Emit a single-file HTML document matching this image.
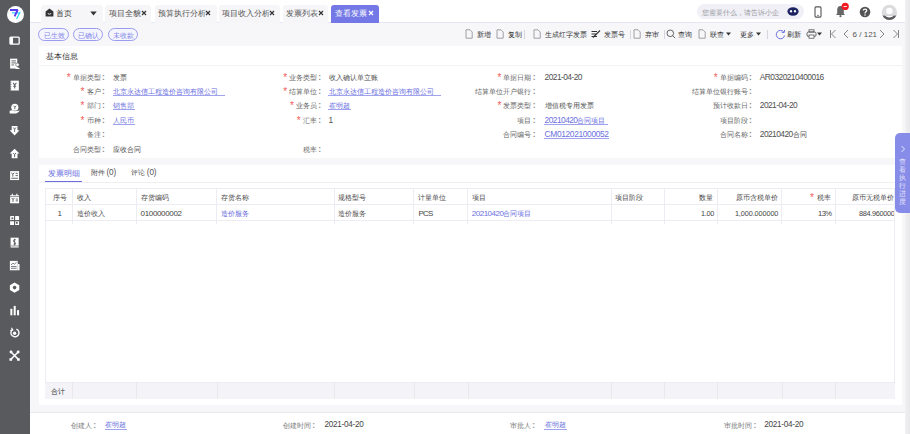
<!DOCTYPE html>
<html><head><meta charset="utf-8">
<style>
*{box-sizing:border-box}
html,body{margin:0;padding:0}
body{width:910px;height:434px;overflow:hidden;position:relative;background:#f7f7fa;font-family:"Liberation Sans",sans-serif;color:#333;font-size:7.2px}
.a{position:absolute}
.t{position:absolute;white-space:nowrap;line-height:10px;height:10px}
.t b{font-weight:normal;font-size:5.6px;-webkit-text-stroke:2.4px currentColor;text-shadow:1.2px 0 currentColor;opacity:0.5;position:relative;left:0.74px;top:-0.78px}
.t em{font-style:normal}
.cjk .t b{font-size:var(--p);letter-spacing:0!important;-webkit-text-stroke:0;text-shadow:none;opacity:1;top:0.3px;left:0}
.bd b{opacity:.6}
.bd em{font-weight:bold}
.ul{position:absolute;height:0.9px;background:#9fa3ee}
.tab{position:absolute;top:5px;height:17.5px;background:#f6f6f8;border-radius:3px 3px 0 0}
.pill{position:absolute;top:28.4px;height:13px;border:0.8px solid #9a9cf0;border-radius:7px;background:#f5f5fe}
.sep{position:absolute;top:30px;width:1px;height:9px;background:#d6d6de}
.vl{position:absolute;width:1px;background:#ececf2}
.hl{position:absolute;height:1px;background:#ececf2}
</style></head><body>

<div class="a" style="left:0;top:0;width:30px;height:434px;background:#595a5e"></div>
<div class="a" style="left:6.9px;top:5.6px;width:17.2px;height:17.2px;border-radius:50%;background:#fff"></div>
<svg class="a" style="left:0;top:0" width="30" height="30" viewBox="0 0 30 30"><path d="M12 12.8 L19.8 12.8 L16.6 19" stroke="#30d2f2" stroke-width="1.2" fill="none"/><path d="M10 10 L17.6 10 L14.6 16.4" stroke="#5a3cf2" stroke-width="1.9" fill="none" stroke-linejoin="bevel"/></svg>
<svg class="a" style="left:9.3px;top:35.40px" width="11.2" height="11.2" viewBox="0 0 10 10"><rect x="0.9" y="1.9" width="8.2" height="6.2" rx="0.8" stroke="#fff" stroke-width="1.2" fill="none"/><rect x="1" y="2" width="2.6" height="6" fill="#fff"/></svg>
<svg class="a" style="left:9.3px;top:57.85px" width="11.2" height="11.2" viewBox="0 0 10 10"><rect x="1" y="0.6" width="6.4" height="8.8" fill="#fff"/><path d="M2.2 2.6 H6.2 M2.2 4.4 H6.2 M2.2 6.2 H4.5" stroke="#595a5e" stroke-width="0.8"/><circle cx="7.6" cy="6" r="1.6" fill="#fff" stroke="#595a5e" stroke-width="0.6"/><path d="M5.4 9.8 Q7.6 6.8 9.8 9.8 Z" fill="#fff"/></svg>
<svg class="a" style="left:9.3px;top:80.30px" width="11.2" height="11.2" viewBox="0 0 10 10"><rect x="1.4" y="0.6" width="7.4" height="8.8" fill="#fff"/><path d="M1 2 H2.2 M1 4 H2.2 M1 6 H2.2 M1 8 H2.2" stroke="#595a5e" stroke-width="0.6"/><path d="M3.6 2.4 L5.1 4.6 L6.6 2.4 M5.1 4.6 V7.6 M3.8 5.6 H6.4" stroke="#595a5e" stroke-width="0.9" fill="none"/></svg>
<svg class="a" style="left:9.3px;top:102.75px" width="11.2" height="11.2" viewBox="0 0 10 10"><circle cx="5.2" cy="3.8" r="3.2" fill="#fff"/><path d="M4 2.4 L5.2 3.8 L6.4 2.4 M5.2 3.8 V5.6" stroke="#595a5e" stroke-width="0.8" fill="none"/><path d="M0.6 7 Q3 5.6 5 7.4 L9.6 6.6 Q8 9.4 5 9.4 L0.6 9.4 Z" fill="#fff"/></svg>
<svg class="a" style="left:9.3px;top:125.20px" width="11.2" height="11.2" viewBox="0 0 10 10"><path d="M2.4 0.8 H7.6 V4.6 H9.4 L5 9.4 L0.6 4.6 H2.4 Z" fill="#fff"/><path d="M3.8 2.2 L5 3.8 L6.2 2.2 M5 3.8 V6.2" stroke="#595a5e" stroke-width="0.8" fill="none"/></svg>
<svg class="a" style="left:9.3px;top:147.65px" width="11.2" height="11.2" viewBox="0 0 10 10"><path d="M5 0.6 L9.4 5 H7.6 V9.2 H2.4 V5 H0.6 Z" fill="#fff"/><path d="M3.8 4.4 L5 6 L6.2 4.4 M5 6 V8.2" stroke="#595a5e" stroke-width="0.8" fill="none"/></svg>
<svg class="a" style="left:9.3px;top:170.10px" width="11.2" height="11.2" viewBox="0 0 10 10"><rect x="1" y="1" width="8" height="8" fill="#fff"/><path d="M2.2 2.4 L3.4 4 L4.6 2.4 M3.4 4 V6 M5.8 3 H8 M5.8 5 H8 M2 7.4 H8" stroke="#595a5e" stroke-width="0.8" fill="none"/></svg>
<svg class="a" style="left:9.3px;top:192.55px" width="11.2" height="11.2" viewBox="0 0 10 10"><rect x="1" y="2" width="8" height="7.2" fill="#fff"/><path d="M3 0.6 V2.6 M7 0.6 V2.6" stroke="#fff" stroke-width="1"/><path d="M1 3.2 H9" stroke="#595a5e" stroke-width="0.6"/><path d="M2.4 4.4 L3.6 6 L4.8 4.4 M3.6 6 V8 M6 5.4 H8 M6 7 H8" stroke="#595a5e" stroke-width="0.8" fill="none"/></svg>
<svg class="a" style="left:9.3px;top:215.00px" width="11.2" height="11.2" viewBox="0 0 10 10"><rect x="1" y="1" width="8" height="8" rx="0.6" fill="#fff"/><path d="M5 1 V9 M1 5 H9" stroke="#595a5e" stroke-width="1"/><rect x="2.2" y="2.2" width="1.6" height="1.6" fill="#595a5e"/><rect x="6.2" y="6.2" width="1.6" height="1.6" fill="#595a5e"/></svg>
<svg class="a" style="left:9.3px;top:237.45px" width="11.2" height="11.2" viewBox="0 0 10 10"><rect x="1.4" y="0.6" width="7.2" height="8.8" fill="#fff"/><path d="M6 2.4 Q4 1.8 4 3.4 Q4 4.6 5.2 4.8 Q6.4 5.2 5.8 6.4 Q5 7 4 6.4 M5 1.6 V7.6" stroke="#595a5e" stroke-width="0.8" fill="none"/><path d="M1.4 8 H8.6" stroke="#595a5e" stroke-width="0.6"/></svg>
<svg class="a" style="left:9.3px;top:259.90px" width="11.2" height="11.2" viewBox="0 0 10 10"><rect x="0.8" y="0.8" width="7" height="8.4" fill="#fff"/><rect x="7.8" y="3.6" width="1.6" height="5.6" fill="#fff"/><path d="M1.8 4.4 L3.6 2.8 L4.8 3.8 L6.8 2" stroke="#595a5e" stroke-width="0.7" fill="none"/><path d="M1.8 5.8 H6.8 M1.8 7.4 H6.8" stroke="#595a5e" stroke-width="0.7"/></svg>
<svg class="a" style="left:9.3px;top:282.35px" width="11.2" height="11.2" viewBox="0 0 10 10"><path d="M5 0.4 L9.2 2.8 V7.2 L5 9.6 L0.8 7.2 V2.8 Z" fill="#fff"/><circle cx="5" cy="5" r="1.6" fill="#595a5e"/></svg>
<svg class="a" style="left:9.3px;top:304.80px" width="11.2" height="11.2" viewBox="0 0 10 10"><rect x="1.2" y="3.4" width="1.8" height="5.8" fill="#fff"/><rect x="4.2" y="0.8" width="1.8" height="8.4" fill="#fff"/><rect x="7.2" y="4.6" width="1.8" height="4.6" fill="#fff"/></svg>
<svg class="a" style="left:9.3px;top:327.25px" width="11.2" height="11.2" viewBox="0 0 10 10"><path d="M3 2.4 A3.6 3.6 0 1 0 6.6 1.8" stroke="#fff" stroke-width="1.2" fill="none"/><path d="M2.2 0.6 L3.4 2.6 L1.2 3.2" stroke="#fff" stroke-width="1" fill="none"/><circle cx="5" cy="5.6" r="1.5" fill="#fff"/></svg>
<svg class="a" style="left:9.3px;top:349.70px" width="11.2" height="11.2" viewBox="0 0 10 10"><path d="M1.4 1.4 L8.6 8.6 M8.6 1.4 L1.4 8.6" stroke="#fff" stroke-width="1.3"/><circle cx="1.8" cy="1.8" r="1.3" fill="#fff"/><circle cx="8.2" cy="1.8" r="1.3" fill="#fff"/><rect x="0.4" y="7.4" width="2.4" height="2.2" fill="#fff"/><rect x="7.2" y="7.4" width="2.4" height="2.2" fill="#fff"/></svg>
<div class="a" style="left:30px;top:0;width:880px;height:23px;background:#fff;border-bottom:1px solid #e6e7f4"></div>
<div class="tab" style="left:41px;width:61.5px;"></div>
<div class="tab" style="left:105.4px;width:46.1px;"></div>
<div class="tab" style="left:154.6px;width:62.2px;"></div>
<div class="tab" style="left:218.8px;width:61.2px;"></div>
<div class="tab" style="left:282.5px;width:45.5px;"></div>
<div class="tab" style="left:331px;width:47.8px;background:#7378e6"></div>
<div class="t " style="top:8.00px;color:#444;font-size:8.4px;left:56.00px;"><b style="--p:7.90px;letter-spacing:3.70px">首页</b></div>
<div class="t " style="top:8.00px;color:#555;font-size:8.4px;left:109.00px;"><b style="--p:7.85px;letter-spacing:3.65px">项目全貌</b></div>
<div class="t " style="top:8.00px;color:#555;font-size:8.4px;left:158.00px;"><b style="--p:7.85px;letter-spacing:3.65px">预算执行分析</b></div>
<div class="t " style="top:8.00px;color:#555;font-size:8.4px;left:222.00px;"><b style="--p:7.85px;letter-spacing:3.65px">项目收入分析</b></div>
<div class="t " style="top:8.00px;color:#555;font-size:8.4px;left:285.80px;"><b style="--p:7.85px;letter-spacing:3.65px">发票列表</b></div>
<div class="t " style="top:8.00px;color:#fff;font-size:8.4px;left:335.00px;"><b style="--p:7.85px;letter-spacing:3.65px">查看发票</b></div>
<svg class="a" style="left:45px;top:8.3px" width="9" height="9" viewBox="0 0 9 9"><path d="M4.5 0.6 L8.4 3.6 L8.4 8.4 L0.6 8.4 L0.6 3.6 Z" fill="#333"/><path d="M2.8 5.6 Q4.5 6.8 6.2 5.6" stroke="#fff" stroke-width="0.9" fill="none"/></svg>
<svg class="a" style="left:90px;top:11.3px" width="7" height="5" viewBox="0 0 7 5"><path d="M0.3 0.5 L6.7 0.5 L3.5 4.5 Z" fill="#333"/></svg>
<svg class="a" style="left:141px;top:10.0px" width="6" height="6" viewBox="0 0 6 6"><path d="M1 1 L5 5 M5 1 L1 5" stroke="#333" stroke-width="1.2"/></svg>
<svg class="a" style="left:204.5px;top:10.0px" width="6" height="6" viewBox="0 0 6 6"><path d="M1 1 L5 5 M5 1 L1 5" stroke="#333" stroke-width="1.2"/></svg>
<svg class="a" style="left:269px;top:10.0px" width="6" height="6" viewBox="0 0 6 6"><path d="M1 1 L5 5 M5 1 L1 5" stroke="#333" stroke-width="1.2"/></svg>
<svg class="a" style="left:318px;top:10.0px" width="6" height="6" viewBox="0 0 6 6"><path d="M1 1 L5 5 M5 1 L1 5" stroke="#333" stroke-width="1.2"/></svg>
<svg class="a" style="left:367.5px;top:10.0px" width="6" height="6" viewBox="0 0 6 6"><path d="M1 1 L5 5 M5 1 L1 5" stroke="#fff" stroke-width="1.2"/></svg>
<div class="a" style="left:697px;top:3.6px;width:106.6px;height:15.8px;border-radius:8px;background:#f0f0f6"></div>
<div class="t " style="top:6.60px;color:#9a9a9e;font-size:8.4px;left:702.00px;"><b style="--p:7.05px;letter-spacing:2.85px">您需要什么，请告诉小企</b></div>
<svg class="a" style="left:787px;top:7px" width="12" height="9" viewBox="0 0 12 9"><ellipse cx="6" cy="4.5" rx="5.6" ry="4.2" fill="#1d2360"/><ellipse cx="4" cy="4.3" rx="1.1" ry="1.3" fill="#fff"/><ellipse cx="8" cy="4.3" rx="1.1" ry="1.3" fill="#fff"/></svg>
<svg class="a" style="left:814px;top:5.5px" width="8" height="12" viewBox="0 0 8 12"><rect x="1" y="0.9" width="6" height="10.2" rx="1" stroke="#555" stroke-width="1.1" fill="none"/><line x1="3" y1="9.4" x2="5" y2="9.4" stroke="#555" stroke-width="0.7"/></svg>
<svg class="a" style="left:834px;top:2px" width="15" height="16" viewBox="0 0 15 16"><path d="M6.5 4 C4 4 3.2 6 3.2 8.2 L3.2 11.6 L2 13 L11 13 L9.8 11.6 L9.8 8.2 C9.8 6 9 4 6.5 4 Z" fill="#666"/><circle cx="6.5" cy="14.2" r="1.1" fill="#666"/><circle cx="11.2" cy="4.4" r="3.6" fill="#f01b24"/><rect x="9.6" y="4" width="3.2" height="0.9" fill="#fff"/></svg>
<svg class="a" style="left:858px;top:4.5px" width="14" height="14" viewBox="0 0 14 14"><circle cx="7" cy="7" r="5.3" fill="#555"/><path d="M5.3 5.6 C5.3 3.6 8.7 3.6 8.7 5.6 C8.7 6.9 7 6.8 7 8.4" stroke="#fff" stroke-width="1.2" fill="none"/><circle cx="7" cy="10" r="0.75" fill="#fff"/></svg>
<svg class="a" style="left:880px;top:2.5px" width="19" height="19" viewBox="0 0 19 19"><defs><clipPath id="av"><circle cx="9.4" cy="9.4" r="7.7"/></clipPath></defs><circle cx="9.4" cy="9.4" r="7.7" fill="#dcdcdf"/><g clip-path="url(#av)"><rect x="0" y="12.6" width="19" height="6" fill="#5a5a5e"/><path d="M4.6 12.6 Q9.4 16.6 14.2 12.6 Z" fill="#fff"/></g><circle cx="9.4" cy="8" r="3.2" fill="#fff"/></svg>
<div class="pill" style="left:38.4px;width:30.5px"></div>
<div class="t " style="top:29.90px;color:#8387e8;font-size:8.4px;left:39.10px;width:30.500000000000007px;text-align:center;"><b style="--p:7.00px;letter-spacing:2.80px">已生效</b></div>
<div class="pill" style="left:72.9px;width:30.3px"></div>
<div class="t " style="top:29.90px;color:#8387e8;font-size:8.4px;left:73.60px;width:30.299999999999997px;text-align:center;"><b style="--p:7.00px;letter-spacing:2.80px">已确认</b></div>
<div class="pill" style="left:108px;width:30.0px"></div>
<div class="t " style="top:29.90px;color:#8387e8;font-size:8.4px;left:108.70px;width:30px;text-align:center;"><b style="--p:7.00px;letter-spacing:2.80px">未收款</b></div>
<div class="t " style="top:29.10px;color:#333;font-size:8.4px;left:476.50px;"><b style="--p:7.00px;letter-spacing:2.80px">新增</b></div>
<div class="t " style="top:29.10px;color:#333;font-size:8.4px;left:507.60px;"><b style="--p:7.00px;letter-spacing:2.80px">复制</b></div>
<div class="t " style="top:29.10px;color:#333;font-size:8.4px;left:544.80px;"><b style="--p:7.00px;letter-spacing:2.80px">生成红字发票</b></div>
<div class="t " style="top:29.10px;color:#333;font-size:8.4px;left:603.60px;"><b style="--p:7.00px;letter-spacing:2.80px">发票号</b></div>
<div class="t " style="top:29.10px;color:#333;font-size:8.4px;left:644.80px;"><b style="--p:7.00px;letter-spacing:2.80px">弃审</b></div>
<div class="t " style="top:29.10px;color:#333;font-size:8.4px;left:677.60px;"><b style="--p:7.00px;letter-spacing:2.80px">查询</b></div>
<div class="t " style="top:29.10px;color:#333;font-size:8.4px;left:709.80px;"><b style="--p:7.00px;letter-spacing:2.80px">联查</b></div>
<div class="t " style="top:29.10px;color:#333;font-size:8.4px;left:740.20px;"><b style="--p:7.00px;letter-spacing:2.80px">更多</b></div>
<div class="t " style="top:29.10px;color:#333;font-size:8.4px;left:786.80px;"><b style="--p:7.00px;letter-spacing:2.80px">刷新</b></div>
<div class="sep" style="left:524.3px"></div>
<div class="sep" style="left:630.3px"></div>
<div class="sep" style="left:664.4px"></div>
<div class="sep" style="left:767.2px"></div>
<svg class="a" style="left:464.8px;top:29.1px" width="8" height="10" viewBox="0 0 8 10"><path d="M1 0.8 L5 0.8 L7.2 3 L7.2 9.2 L1 9.2 Z" stroke="#8a8a8e" stroke-width="0.8" fill="none"/></svg>
<svg class="a" style="left:495.7px;top:29.1px" width="8" height="10" viewBox="0 0 8 10"><path d="M1 0.8 L5 0.8 L7.2 3 L7.2 9.2 L1 9.2 Z" stroke="#8a8a8e" stroke-width="0.8" fill="none"/></svg>
<svg class="a" style="left:533px;top:29.1px" width="8" height="10" viewBox="0 0 8 10"><path d="M1 0.8 L5 0.8 L7.2 3 L7.2 9.2 L1 9.2 Z" stroke="#8a8a8e" stroke-width="0.8" fill="none"/></svg>
<svg class="a" style="left:633px;top:29.1px" width="8" height="10" viewBox="0 0 8 10"><path d="M1 0.8 L5 0.8 L7.2 3 L7.2 9.2 L1 9.2 Z" stroke="#8a8a8e" stroke-width="0.8" fill="none"/></svg>
<svg class="a" style="left:698px;top:29.1px" width="8" height="10" viewBox="0 0 8 10"><path d="M1 0.8 L5 0.8 L7.2 3 L7.2 9.2 L1 9.2 Z" stroke="#8a8a8e" stroke-width="0.8" fill="none"/></svg>
<svg class="a" style="left:591px;top:30.1px" width="10" height="8" viewBox="0 0 10 8"><path d="M0.5 1.5 L6 1.5 M0.5 4 L5 4 M0.5 6.5 L6 6.5 M2 7.5 L9 0.5" stroke="#333" stroke-width="1.1"/></svg>
<svg class="a" style="left:665.5px;top:29.1px" width="10" height="10" viewBox="0 0 10 10"><circle cx="4.3" cy="4.3" r="3.3" stroke="#555" stroke-width="0.9" fill="none"/><path d="M6.7 6.7 L9.2 9.2" stroke="#555" stroke-width="0.9"/></svg>
<svg class="a" style="left:726.0px;top:32.1px" width="5" height="4" viewBox="0 0 5 4"><path d="M0 0.5 L5 0.5 L2.5 3.5 Z" fill="#333"/></svg>
<svg class="a" style="left:756.3px;top:32.1px" width="5" height="4" viewBox="0 0 5 4"><path d="M0 0.5 L5 0.5 L2.5 3.5 Z" fill="#333"/></svg>
<svg class="a" style="left:817.2px;top:32.1px" width="5" height="4" viewBox="0 0 5 4"><path d="M0 0.5 L5 0.5 L2.5 3.5 Z" fill="#333"/></svg>
<svg class="a" style="left:775px;top:28.6px" width="11" height="11" viewBox="0 0 11 11"><path d="M8.8 3 A4.2 4.2 0 1 0 9.6 6.5" stroke="#6b6fe0" stroke-width="1" fill="none"/><path d="M9.6 1 L9.2 3.6 L6.6 3.2" stroke="#6b6fe0" stroke-width="1" fill="none"/></svg>
<svg class="a" style="left:806px;top:29.1px" width="11" height="10" viewBox="0 0 11 10"><rect x="1" y="3" width="9" height="4.5" rx="1.5" stroke="#555" stroke-width="0.9" fill="none"/><rect x="3" y="0.8" width="5" height="2.2" stroke="#555" stroke-width="0.8" fill="none"/><rect x="3" y="6" width="5" height="3.2" stroke="#555" stroke-width="0.8" fill="#fff"/></svg>
<svg class="a" style="left:829px;top:29.1px" width="8" height="10" viewBox="0 0 8 10"><path d="M1.5 1 L1.5 9 M6.5 1 L2.5 5 L6.5 9" stroke="#666" stroke-width="0.8" fill="none"/></svg>
<svg class="a" style="left:843px;top:29.1px" width="6" height="10" viewBox="0 0 6 10"><path d="M5 1 L1 5 L5 9" stroke="#666" stroke-width="0.8" fill="none"/></svg>
<div class="t " style="top:29.60px;color:#555;font-size:8px;left:852.60px;"><em style="letter-spacing:0px">6 / 121</em></div>
<svg class="a" style="left:879px;top:29.1px" width="6" height="10" viewBox="0 0 6 10"><path d="M1 1 L5 5 L1 9" stroke="#666" stroke-width="0.8" fill="none"/></svg>
<svg class="a" style="left:891.5px;top:29.1px" width="8" height="10" viewBox="0 0 8 10"><path d="M1.5 1 L5.5 5 L1.5 9 M6.5 1 L6.5 9" stroke="#666" stroke-width="0.8" fill="none"/></svg>
<div class="a" style="left:39px;top:46px;width:862.5px;height:111.6px;background:#fff"></div>
<div class="hl" style="left:39px;top:64.5px;width:862.5px;background:#f3f3f6"></div>
<div class="t bd" style="top:50.40px;color:#333;font-size:8.4px;left:45.70px;"><b style="--p:8.30px;letter-spacing:4.10px">基本信息</b></div>
<div class="t " style="top:72.00px;color:#666;font-size:8.4px;right:805.90px;text-align:right;"><b style="--p:6.85px;letter-spacing:2.65px">单据类型</b><em style="letter-spacing:-0.55px"><i style="font-style:normal;font-weight:bold;font-size:8.5px;opacity:.75;margin-left:1.45px;margin-right:-0.2px">:</i></em></div>
<div class="t" style="left:66.85px;top:73.10px;color:#f25a5a;font-size:10px">*</div>
<div class="t " style="top:72.00px;color:#505050;font-size:8.4px;left:113.00px;"><b style="--p:7.15px;letter-spacing:2.95px">发票</b></div>
<div class="t " style="top:86.10px;color:#666;font-size:8.4px;right:805.90px;text-align:right;"><b style="--p:6.85px;letter-spacing:2.65px">客户</b><em style="letter-spacing:-0.55px"><i style="font-style:normal;font-weight:bold;font-size:8.5px;opacity:.75;margin-left:1.45px;margin-right:-0.2px">:</i></em></div>
<div class="t" style="left:80.55px;top:87.20px;color:#f25a5a;font-size:10px">*</div>
<div class="t " style="top:86.10px;color:#6b6fe0;font-size:8.4px;left:113.00px;"><b style="--p:7.47px;letter-spacing:3.27px">北京永达信工程造价咨询有限公司</b></div>
<div class="ul" style="left:112.80px;top:95.10px;width:112.4px"></div>
<div class="t " style="top:100.00px;color:#666;font-size:8.4px;right:805.90px;text-align:right;"><b style="--p:6.85px;letter-spacing:2.65px">部门</b><em style="letter-spacing:-0.55px"><i style="font-style:normal;font-weight:bold;font-size:8.5px;opacity:.75;margin-left:1.45px;margin-right:-0.2px">:</i></em></div>
<div class="t" style="left:80.55px;top:101.10px;color:#f25a5a;font-size:10px">*</div>
<div class="t " style="top:100.00px;color:#6b6fe0;font-size:8.4px;left:113.00px;"><b style="--p:7.15px;letter-spacing:2.95px">销售部</b></div>
<div class="ul" style="left:112.80px;top:109.00px;width:22.4px"></div>
<div class="t " style="top:114.50px;color:#666;font-size:8.4px;right:805.90px;text-align:right;"><b style="--p:6.85px;letter-spacing:2.65px">币种</b><em style="letter-spacing:-0.55px"><i style="font-style:normal;font-weight:bold;font-size:8.5px;opacity:.75;margin-left:1.45px;margin-right:-0.2px">:</i></em></div>
<div class="t" style="left:80.55px;top:115.60px;color:#f25a5a;font-size:10px">*</div>
<div class="t " style="top:114.50px;color:#6b6fe0;font-size:8.4px;left:113.00px;"><b style="--p:7.15px;letter-spacing:2.95px">人民币</b></div>
<div class="ul" style="left:112.80px;top:123.50px;width:22.4px"></div>
<div class="t " style="top:129.00px;color:#666;font-size:8.4px;right:805.90px;text-align:right;"><b style="--p:6.85px;letter-spacing:2.65px">备注</b><em style="letter-spacing:-0.55px"><i style="font-style:normal;font-weight:bold;font-size:8.5px;opacity:.75;margin-left:1.45px;margin-right:-0.2px">:</i></em></div>
<div class="t " style="top:144.20px;color:#666;font-size:8.4px;right:805.90px;text-align:right;"><b style="--p:6.85px;letter-spacing:2.65px">合同类型</b><em style="letter-spacing:-0.55px"><i style="font-style:normal;font-weight:bold;font-size:8.5px;opacity:.75;margin-left:1.45px;margin-right:-0.2px">:</i></em></div>
<div class="t " style="top:144.20px;color:#505050;font-size:8.4px;left:113.00px;"><b style="--p:7.15px;letter-spacing:2.95px">应收合同</b></div>
<div class="t " style="top:72.00px;color:#666;font-size:8.4px;right:589.60px;text-align:right;"><b style="--p:6.85px;letter-spacing:2.65px">业务类型</b><em style="letter-spacing:-0.55px"><i style="font-style:normal;font-weight:bold;font-size:8.5px;opacity:.75;margin-left:1.45px;margin-right:-0.2px">:</i></em></div>
<div class="t" style="left:283.15px;top:73.10px;color:#f25a5a;font-size:10px">*</div>
<div class="t " style="top:72.00px;color:#505050;font-size:8.4px;left:328.50px;"><b style="--p:7.15px;letter-spacing:2.95px">收入确认单立账</b></div>
<div class="t " style="top:86.10px;color:#666;font-size:8.4px;right:589.60px;text-align:right;"><b style="--p:6.85px;letter-spacing:2.65px">结算单位</b><em style="letter-spacing:-0.55px"><i style="font-style:normal;font-weight:bold;font-size:8.5px;opacity:.75;margin-left:1.45px;margin-right:-0.2px">:</i></em></div>
<div class="t" style="left:283.15px;top:87.20px;color:#f25a5a;font-size:10px">*</div>
<div class="t " style="top:86.10px;color:#6b6fe0;font-size:8.4px;left:328.50px;"><b style="--p:7.47px;letter-spacing:3.27px">北京永达信工程造价咨询有限公司</b></div>
<div class="ul" style="left:328.30px;top:95.10px;width:112.4px"></div>
<div class="t " style="top:100.00px;color:#666;font-size:8.4px;right:589.60px;text-align:right;"><b style="--p:6.85px;letter-spacing:2.65px">业务员</b><em style="letter-spacing:-0.55px"><i style="font-style:normal;font-weight:bold;font-size:8.5px;opacity:.75;margin-left:1.45px;margin-right:-0.2px">:</i></em></div>
<div class="t" style="left:290.00px;top:101.10px;color:#f25a5a;font-size:10px">*</div>
<div class="t " style="top:100.00px;color:#6b6fe0;font-size:8.4px;left:328.50px;"><b style="--p:7.15px;letter-spacing:2.95px">崔明超</b></div>
<div class="ul" style="left:328.30px;top:109.00px;width:22.4px"></div>
<div class="t " style="top:114.50px;color:#666;font-size:8.4px;right:589.60px;text-align:right;"><b style="--p:6.85px;letter-spacing:2.65px">汇率</b><em style="letter-spacing:-0.55px"><i style="font-style:normal;font-weight:bold;font-size:8.5px;opacity:.75;margin-left:1.45px;margin-right:-0.2px">:</i></em></div>
<div class="t" style="left:296.85px;top:115.60px;color:#f25a5a;font-size:10px">*</div>
<div class="t " style="top:114.50px;color:#505050;font-size:8.4px;left:328.50px;"><em style="letter-spacing:-0.55px">1</em></div>
<div class="t " style="top:144.20px;color:#666;font-size:8.4px;right:589.60px;text-align:right;"><b style="--p:6.85px;letter-spacing:2.65px">税率</b><em style="letter-spacing:-0.55px"><i style="font-style:normal;font-weight:bold;font-size:8.5px;opacity:.75;margin-left:1.45px;margin-right:-0.2px">:</i></em></div>
<div class="t " style="top:72.00px;color:#666;font-size:8.4px;right:375.20px;text-align:right;"><b style="--p:6.85px;letter-spacing:2.65px">单据日期</b><em style="letter-spacing:-0.55px"><i style="font-style:normal;font-weight:bold;font-size:8.5px;opacity:.75;margin-left:1.45px;margin-right:-0.2px">:</i></em></div>
<div class="t" style="left:497.55px;top:73.10px;color:#f25a5a;font-size:10px">*</div>
<div class="t " style="top:72.00px;color:#505050;font-size:8.4px;left:544.60px;"><em style="letter-spacing:-0.55px">2021-04-20</em></div>
<div class="t " style="top:86.10px;color:#666;font-size:8.4px;right:375.20px;text-align:right;"><b style="--p:6.85px;letter-spacing:2.65px">结算单位开户银行</b><em style="letter-spacing:-0.55px"><i style="font-style:normal;font-weight:bold;font-size:8.5px;opacity:.75;margin-left:1.45px;margin-right:-0.2px">:</i></em></div>
<div class="t " style="top:100.00px;color:#666;font-size:8.4px;right:375.20px;text-align:right;"><b style="--p:6.85px;letter-spacing:2.65px">发票类型</b><em style="letter-spacing:-0.55px"><i style="font-style:normal;font-weight:bold;font-size:8.5px;opacity:.75;margin-left:1.45px;margin-right:-0.2px">:</i></em></div>
<div class="t" style="left:497.55px;top:101.10px;color:#f25a5a;font-size:10px">*</div>
<div class="t " style="top:100.00px;color:#505050;font-size:8.4px;left:544.60px;"><b style="--p:7.15px;letter-spacing:2.95px">增值税专用发票</b></div>
<div class="t " style="top:114.50px;color:#666;font-size:8.4px;right:375.20px;text-align:right;"><b style="--p:6.85px;letter-spacing:2.65px">项目</b><em style="letter-spacing:-0.55px"><i style="font-style:normal;font-weight:bold;font-size:8.5px;opacity:.75;margin-left:1.45px;margin-right:-0.2px">:</i></em></div>
<div class="t " style="top:114.50px;color:#6b6fe0;font-size:8.4px;left:544.60px;"><em style="letter-spacing:-0.55px">20210420</em><b style="--p:7.47px;letter-spacing:3.27px">合同项目</b></div>
<div class="ul" style="left:544.40px;top:123.50px;width:64.1px"></div>
<div class="t " style="top:129.00px;color:#666;font-size:8.4px;right:375.20px;text-align:right;"><b style="--p:6.85px;letter-spacing:2.65px">合同编号</b><em style="letter-spacing:-0.55px"><i style="font-style:normal;font-weight:bold;font-size:8.5px;opacity:.75;margin-left:1.45px;margin-right:-0.2px">:</i></em></div>
<div class="t " style="top:129.00px;color:#6b6fe0;font-size:8.4px;left:544.60px;"><em style="letter-spacing:-0.35px">CM012021000052</em></div>
<div class="ul" style="left:544.40px;top:138.00px;width:64.8px"></div>
<div class="t " style="top:72.00px;color:#666;font-size:8.4px;right:158.90px;text-align:right;"><b style="--p:6.85px;letter-spacing:2.65px">单据编码</b><em style="letter-spacing:-0.55px"><i style="font-style:normal;font-weight:bold;font-size:8.5px;opacity:.75;margin-left:1.45px;margin-right:-0.2px">:</i></em></div>
<div class="t" style="left:713.85px;top:73.10px;color:#f25a5a;font-size:10px">*</div>
<div class="t " style="top:72.00px;color:#505050;font-size:8.4px;left:759.80px;"><em style="letter-spacing:-0.55px">AR0320210400016</em></div>
<div class="t " style="top:86.10px;color:#666;font-size:8.4px;right:158.90px;text-align:right;"><b style="--p:6.85px;letter-spacing:2.65px">结算单位银行账号</b><em style="letter-spacing:-0.55px"><i style="font-style:normal;font-weight:bold;font-size:8.5px;opacity:.75;margin-left:1.45px;margin-right:-0.2px">:</i></em></div>
<div class="t " style="top:100.00px;color:#666;font-size:8.4px;right:158.90px;text-align:right;"><b style="--p:6.85px;letter-spacing:2.65px">预计收款日</b><em style="letter-spacing:-0.55px"><i style="font-style:normal;font-weight:bold;font-size:8.5px;opacity:.75;margin-left:1.45px;margin-right:-0.2px">:</i></em></div>
<div class="t " style="top:100.00px;color:#505050;font-size:8.4px;left:759.80px;"><em style="letter-spacing:-0.55px">2021-04-20</em></div>
<div class="t " style="top:114.50px;color:#666;font-size:8.4px;right:158.90px;text-align:right;"><b style="--p:6.85px;letter-spacing:2.65px">项目阶段</b><em style="letter-spacing:-0.55px"><i style="font-style:normal;font-weight:bold;font-size:8.5px;opacity:.75;margin-left:1.45px;margin-right:-0.2px">:</i></em></div>
<div class="t " style="top:129.00px;color:#666;font-size:8.4px;right:158.90px;text-align:right;"><b style="--p:6.85px;letter-spacing:2.65px">合同名称</b><em style="letter-spacing:-0.55px"><i style="font-style:normal;font-weight:bold;font-size:8.5px;opacity:.75;margin-left:1.45px;margin-right:-0.2px">:</i></em></div>
<div class="t " style="top:129.00px;color:#505050;font-size:8.4px;left:759.80px;"><em style="letter-spacing:-0.55px">20210420</em><b style="--p:7.15px;letter-spacing:2.95px">合同</b></div>
<div class="a" style="left:38.5px;top:164.5px;width:863px;height:240.7px;background:#fff"></div>
<div class="hl" style="left:38.5px;top:181.5px;width:863px;background:#eeeef3"></div>
<div class="t " style="top:168.20px;color:#6b6fe0;font-size:8.4px;left:48.30px;"><b style="--p:8.10px;letter-spacing:3.90px">发票明细</b></div>
<div class="a" style="left:44.5px;top:180.8px;width:37px;height:1.6px;background:#6b6fe0"></div>
<div class="t " style="top:168.20px;color:#555;font-size:8.2px;left:90.50px;"><b style="--p:7.20px;letter-spacing:3.00px">附件</b><em style="letter-spacing:-0.2px"> (0)</em></div>
<div class="t " style="top:168.20px;color:#555;font-size:8.2px;left:130.80px;"><b style="--p:7.20px;letter-spacing:3.00px">评论</b><em style="letter-spacing:-0.2px"> (0)</em></div>
<div class="a" style="left:45px;top:188.2px;width:850px;height:210.60000000000002px;border:1px solid #ececf2"></div>
<div class="hl" style="left:45px;top:204px;width:850px"></div>
<div class="hl" style="left:45px;top:220.3px;width:850px"></div>
<div class="a" style="left:45px;top:382px;width:850px;height:16.6px;background:#f3f3f8;border-top:1px solid #ececf2"></div>
<div class="vl" style="left:72.3px;top:188.2px;height:36px"></div>
<div class="vl" style="left:135.6px;top:188.2px;height:36px"></div>
<div class="vl" style="left:216.4px;top:188.2px;height:36px"></div>
<div class="vl" style="left:334.2px;top:188.2px;height:36px"></div>
<div class="vl" style="left:413.4px;top:188.2px;height:36px"></div>
<div class="vl" style="left:466.8px;top:188.2px;height:36px"></div>
<div class="vl" style="left:611px;top:188.2px;height:36px"></div>
<div class="vl" style="left:664.4px;top:188.2px;height:36px"></div>
<div class="vl" style="left:717.2px;top:188.2px;height:36px"></div>
<div class="vl" style="left:781.4px;top:188.2px;height:36px"></div>
<div class="vl" style="left:835.2px;top:188.2px;height:36px"></div>
<div class="vl" style="left:72px;top:382px;height:16.6px;background:#e8e8ef"></div>
<div class="vl" style="left:136.3px;top:382px;height:16.6px;background:#e8e8ef"></div>
<div class="vl" style="left:216.6px;top:382px;height:16.6px;background:#e8e8ef"></div>
<div class="vl" style="left:334px;top:382px;height:16.6px;background:#e8e8ef"></div>
<div class="vl" style="left:413.6px;top:382px;height:16.6px;background:#e8e8ef"></div>
<div class="vl" style="left:467.5px;top:382px;height:16.6px;background:#e8e8ef"></div>
<div class="vl" style="left:611px;top:382px;height:16.6px;background:#e8e8ef"></div>
<div class="vl" style="left:664.4px;top:382px;height:16.6px;background:#e8e8ef"></div>
<div class="vl" style="left:717.4px;top:382px;height:16.6px;background:#e8e8ef"></div>
<div class="vl" style="left:781.5px;top:382px;height:16.6px;background:#e8e8ef"></div>
<div class="vl" style="left:835.2px;top:382px;height:16.6px;background:#e8e8ef"></div>
<div class="t bd" style="top:191.40px;color:#4a4a4a;font-size:8.4px;left:52.50px;"><b style="--p:7.00px;letter-spacing:2.80px">序号</b></div>
<div class="t bd" style="top:191.40px;color:#4a4a4a;font-size:8.4px;left:77.00px;"><b style="--p:7.00px;letter-spacing:2.80px">收入</b></div>
<div class="t bd" style="top:191.40px;color:#4a4a4a;font-size:8.4px;left:140.60px;"><b style="--p:7.00px;letter-spacing:2.80px">存货编码</b></div>
<div class="t bd" style="top:191.40px;color:#4a4a4a;font-size:8.4px;left:220.70px;"><b style="--p:7.00px;letter-spacing:2.80px">存货名称</b></div>
<div class="t bd" style="top:191.40px;color:#4a4a4a;font-size:8.4px;left:338.20px;"><b style="--p:7.00px;letter-spacing:2.80px">规格型号</b></div>
<div class="t bd" style="top:191.40px;color:#4a4a4a;font-size:8.4px;left:418.40px;"><b style="--p:7.00px;letter-spacing:2.80px">计量单位</b></div>
<div class="t bd" style="top:191.40px;color:#4a4a4a;font-size:8.4px;left:471.80px;"><b style="--p:7.00px;letter-spacing:2.80px">项目</b></div>
<div class="t bd" style="top:191.40px;color:#4a4a4a;font-size:8.4px;left:615.20px;"><b style="--p:7.00px;letter-spacing:2.80px">项目阶段</b></div>
<div class="t bd" style="top:191.40px;color:#4a4a4a;font-size:8.4px;right:196.58px;text-align:right;"><b style="--p:7.00px;letter-spacing:2.80px">数量</b></div>
<div class="t bd" style="top:191.40px;color:#4a4a4a;font-size:8.4px;right:132.28px;text-align:right;"><b style="--p:7.00px;letter-spacing:2.80px">原币含税单价</b></div>
<div class="t bd" style="top:191.40px;color:#4a4a4a;font-size:8.4px;right:78.78px;text-align:right;"><b style="--p:7.00px;letter-spacing:2.80px">税率</b></div>
<div class="t bd" style="top:191.40px;color:#4a4a4a;font-size:8.4px;left:852.00px;width:42px;overflow:hidden"><b style="--p:7.00px;letter-spacing:2.80px">原币无税单价</b></div>
<div class="t" style="left:810px;top:192.50px;color:#f25a5a;font-size:10px">*</div>
<div class="t " style="top:208.80px;color:#444;font-size:8px;left:57.60px;"><em style="letter-spacing:0px">1</em></div>
<div class="t " style="top:208.80px;color:#555;font-size:8px;left:77.00px;"><b style="--p:7.00px;letter-spacing:2.80px">造价收入</b></div>
<div class="t " style="top:208.80px;color:#444;font-size:8px;left:140.60px;"><em style="letter-spacing:-0.35px">0100000002</em></div>
<div class="t " style="top:208.80px;color:#6b6fe0;font-size:8px;left:220.70px;"><b style="--p:7.00px;letter-spacing:2.80px">造价服务</b></div>
<div class="t " style="top:208.80px;color:#555;font-size:8px;left:338.20px;"><b style="--p:7.00px;letter-spacing:2.80px">造价服务</b></div>
<div class="t " style="top:208.80px;color:#444;font-size:8px;left:418.40px;"><em style="letter-spacing:-0.8px">PCS</em></div>
<div class="t " style="top:208.80px;color:#6b6fe0;font-size:8px;left:471.80px;"><em style="letter-spacing:-0.5px">20210420</em><b style="--p:7.00px;letter-spacing:2.80px">合同项目</b></div>
<div class="t " style="top:208.80px;color:#444;font-size:7.3px;right:196.10px;text-align:right;"><em style="letter-spacing:-0.3px">1.00</em></div>
<div class="t " style="top:208.80px;color:#444;font-size:7.3px;right:131.70px;text-align:right;"><em style="letter-spacing:-0.1px">1,000.000000</em></div>
<div class="t " style="top:208.80px;color:#444;font-size:7.6px;right:78.50px;text-align:right;"><em style="letter-spacing:-0.6px">13%</em></div>
<div class="t" style="left:840px;width:54px;top:208.8px;overflow:hidden;text-align:right;color:#444;font-size:7.3px;letter-spacing:-0.3px"><span style="position:relative;left:0.5px">884.960000</span></div>
<div class="t bd" style="top:385.90px;color:#333;font-size:8.4px;left:50.90px;"><b style="--p:7.20px;letter-spacing:3.00px">合计</b></div>
<div class="a" style="left:30px;top:412.2px;width:880px;height:22px;background:#fff;border-top:1px solid #e8e8ee"></div>
<div class="t " style="top:419.50px;color:#777;font-size:8.4px;right:814.70px;text-align:right;"><b style="--p:7.30px;letter-spacing:3.10px">创建人</b><em style="letter-spacing:-0.55px"><i style="font-style:normal;font-weight:bold;font-size:8.5px;opacity:.75;margin-left:1.00px;margin-right:-0.2px">:</i></em></div>
<div class="t " style="top:419.50px;color:#6b6fe0;font-size:8.2px;left:104.70px;"><b style="--p:7.20px;letter-spacing:3.00px">崔明超</b></div>
<div class="ul" style="left:104.50px;top:428.50px;width:22.4px"></div>
<div class="t " style="top:419.50px;color:#777;font-size:8.4px;right:595.70px;text-align:right;"><b style="--p:7.30px;letter-spacing:3.10px">创建时间</b><em style="letter-spacing:-0.55px"><i style="font-style:normal;font-weight:bold;font-size:8.5px;opacity:.75;margin-left:1.00px;margin-right:-0.2px">:</i></em></div>
<div class="t " style="top:419.50px;color:#444;font-size:8.2px;left:324.60px;"><em style="letter-spacing:-0.3px">2021-04-20</em></div>
<div class="t " style="top:419.50px;color:#777;font-size:8.4px;right:375.70px;text-align:right;"><b style="--p:7.30px;letter-spacing:3.10px">审批人</b><em style="letter-spacing:-0.55px"><i style="font-style:normal;font-weight:bold;font-size:8.5px;opacity:.75;margin-left:1.00px;margin-right:-0.2px">:</i></em></div>
<div class="t " style="top:419.50px;color:#6b6fe0;font-size:8.2px;left:544.60px;"><b style="--p:7.20px;letter-spacing:3.00px">崔明超</b></div>
<div class="ul" style="left:544.40px;top:428.50px;width:22.4px"></div>
<div class="t " style="top:419.50px;color:#777;font-size:8.4px;right:154.50px;text-align:right;"><b style="--p:7.30px;letter-spacing:3.10px">审批时间</b><em style="letter-spacing:-0.55px"><i style="font-style:normal;font-weight:bold;font-size:8.5px;opacity:.75;margin-left:1.00px;margin-right:-0.2px">:</i></em></div>
<div class="t " style="top:419.50px;color:#444;font-size:8.2px;left:764.30px;"><em style="letter-spacing:-0.3px">2021-04-20</em></div>
<div class="a" style="left:904.5px;top:0;width:5.5px;height:434px;background:linear-gradient(90deg,#f1f1f3,#ebebee 60%,#e9e9ec)"></div>
<div class="a" style="left:894.8px;top:132.7px;width:20px;height:80.5px;border-radius:5px 0 0 5px;background:#888ce9"></div>
<svg class="a" style="left:899.5px;top:144.6px" width="6" height="8" viewBox="0 0 6 8"><path d="M1.5 1 L4.5 4 L1.5 7" stroke="#fff" stroke-width="0.8" fill="none"/></svg>
<div class="t " style="top:155.80px;color:#fff;font-size:8.4px;left:898.60px;width:12px;opacity:.75"><b style="--p:6.80px;letter-spacing:2.60px">查</b></div>
<div class="t " style="top:163.85px;color:#fff;font-size:8.4px;left:898.60px;width:12px;opacity:.75"><b style="--p:6.80px;letter-spacing:2.60px">看</b></div>
<div class="t " style="top:171.90px;color:#fff;font-size:8.4px;left:898.60px;width:12px;opacity:.75"><b style="--p:6.80px;letter-spacing:2.60px">执</b></div>
<div class="t " style="top:179.95px;color:#fff;font-size:8.4px;left:898.60px;width:12px;opacity:.75"><b style="--p:6.80px;letter-spacing:2.60px">行</b></div>
<div class="t " style="top:188.00px;color:#fff;font-size:8.4px;left:898.60px;width:12px;opacity:.75"><b style="--p:6.80px;letter-spacing:2.60px">进</b></div>
<div class="t " style="top:196.05px;color:#fff;font-size:8.4px;left:898.60px;width:12px;opacity:.75"><b style="--p:6.80px;letter-spacing:2.60px">度</b></div>
<script>(function(){var s=document.createElement("span");s.style.cssText="font:100px 'Liberation Sans',sans-serif;position:absolute;left:0;top:0;visibility:hidden;white-space:nowrap";s.textContent="北京";document.body.appendChild(s);var w=s.getBoundingClientRect().width;document.body.removeChild(s);if(w>170)document.body.className+=" cjk";})();</script>
</body></html>
